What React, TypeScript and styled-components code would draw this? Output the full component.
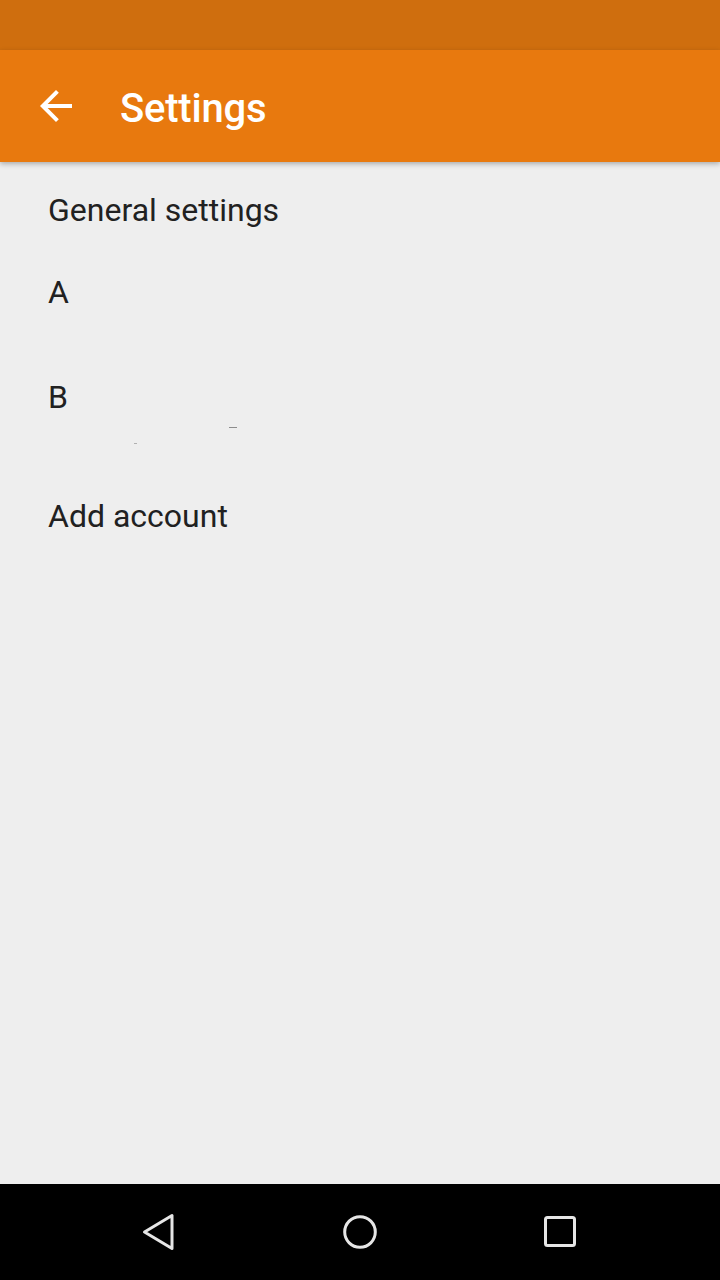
import React from "react";
import styled, { createGlobalStyle } from "styled-components";

const Global = createGlobalStyle`
  html, body { margin: 0; padding: 0; background: #eeeeee; }
  body { font-family: Roboto, "Noto Sans", "Liberation Sans", sans-serif; }
  * { box-sizing: border-box; }
`;

const Screen = styled.div`
  width: 720px;
  height: 1280px;
  display: flex;
  flex-direction: column;
  background: #eeeeee;
  overflow: hidden;
`;

const StatusBar = styled.div`
  height: 50px;
  flex: none;
  background: #cf6e0e;
`;

const Toolbar = styled.header`
  position: relative;
  z-index: 2;
  height: 112px;
  flex: none;
  display: flex;
  align-items: center;
  padding-left: 32px;
  gap: 40px;
  background: #e8790e;
  box-shadow: 0 2px 5px rgba(0, 0, 0, 0.28);
`;

const IconButton = styled.div`
  width: 48px;
  height: 48px;
  display: flex;
  align-items: center;
  justify-content: center;
`;

const Title = styled.h1`
  margin: 6px 0 0 0;
  font-size: 40px;
  line-height: 48px;
  font-weight: 500;
  letter-spacing: -0.2px;
  color: #ffffff;
`;

const Content = styled.main`
  flex: 1;
  display: flex;
  flex-direction: column;
  padding: 28px 0 0 48px;
`;

const Item = styled.div<{ $top: number }>`
  margin-top: ${(p) => p.$top}px;
  font-size: 32px;
  line-height: 40px;
  color: #212121;
`;

const Residue = styled.div`
  height: 26px;
  position: relative;
`;

const Speck = styled.span<{ $x: number; $y: number; $w: number; $o: number }>`
  position: absolute;
  left: ${(p) => p.$x}px;
  top: ${(p) => p.$y}px;
  width: ${(p) => p.$w}px;
  height: 1px;
  background: rgba(60, 60, 60, ${(p) => p.$o});
`;

const NavBar = styled.nav`
  height: 96px;
  flex: none;
  background: #000000;
  display: grid;
  grid-template-columns: repeat(3, 200px);
  justify-content: center;
  align-items: center;
`;

const NavButton = styled.div`
  display: flex;
  align-items: center;
  justify-content: center;
  height: 96px;
`;

export default function App() {
  return (
    <>
      <Global />
      <Screen>
        <StatusBar />
        <Toolbar>
          <IconButton>
            <svg width="48" height="48" viewBox="0 0 24 24" fill="#ffffff">
              <path d="M20 11H7.83l5.59-5.59L12 4l-8 8 8 8 1.41-1.41L7.83 13H20v-2z" />
            </svg>
          </IconButton>
          <Title>Settings</Title>
        </Toolbar>
        <Content>
          <Item $top={0}>General settings</Item>
          <Item $top={42}>A</Item>
          <Item $top={65}>B</Item>
          <Residue>
            <Speck $x={181} $y={10} $w={8} $o={0.55} />
            <Speck $x={86} $y={26} $w={3} $o={0.35} />
          </Residue>
          <Item $top={53}>Add account</Item>
        </Content>
        <NavBar>
          <NavButton>
            <svg width="40" height="44" viewBox="0 0 40 44">
              <path
                d="M32 5.5 L32 38.5 L4.5 22 Z"
                fill="none"
                stroke="#e6e6e6"
                strokeWidth="3"
                strokeLinejoin="round"
              />
            </svg>
          </NavButton>
          <NavButton>
            <svg width="40" height="40" viewBox="0 0 40 40">
              <circle cx="20" cy="20" r="15.3" fill="none" stroke="#e6e6e6" strokeWidth="3" />
            </svg>
          </NavButton>
          <NavButton>
            <svg width="40" height="40" viewBox="0 0 40 40">
              <rect x="5.5" y="5.5" width="29" height="28" rx="2" fill="none" stroke="#e6e6e6" strokeWidth="3" />
            </svg>
          </NavButton>
        </NavBar>
      </Screen>
    </>
  );
}
